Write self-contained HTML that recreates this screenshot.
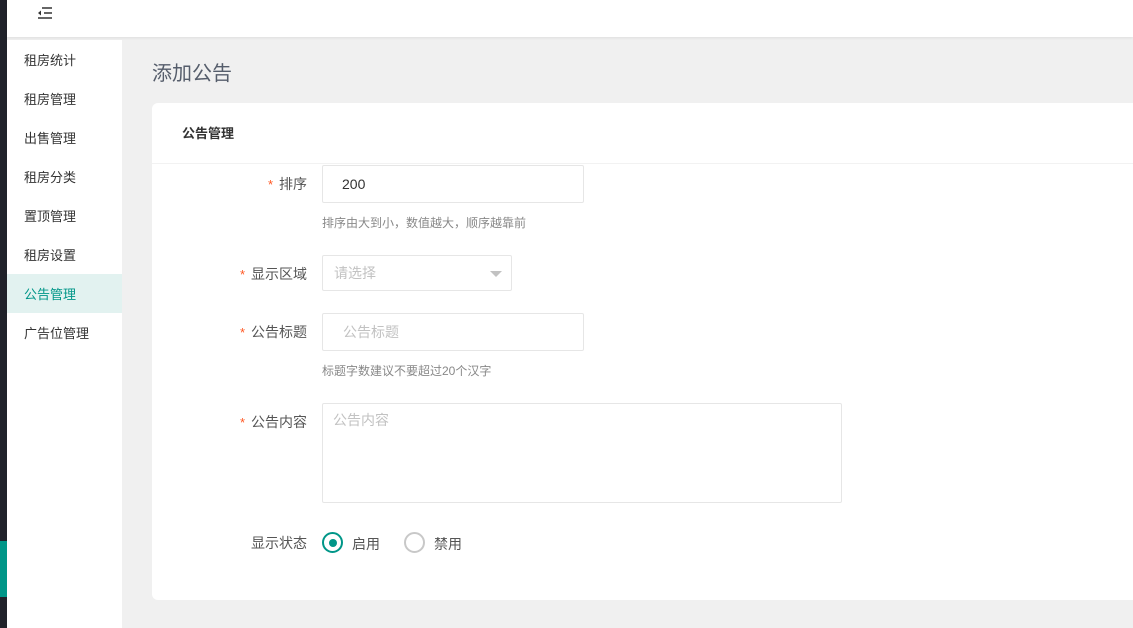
<!DOCTYPE html>
<html><head><meta charset="utf-8"><style>
*{margin:0;padding:0;box-sizing:border-box}
body{width:1133px;height:628px;overflow:hidden;background:#f0f0f0;font-family:"Liberation Sans","Noto Sans CJK SC",sans-serif;font-size:13px;color:#333;position:relative}
.strip{position:absolute;left:0;top:0;width:7px;height:628px;background:#20222a}
.strip i{position:absolute;left:0;top:541px;width:7px;height:56px;background:#009688}
.head{position:absolute;left:7px;top:0;right:0;height:37px;background:#fff;box-shadow:0 1px 3px rgba(0,0,0,.08)}
.side{position:absolute;left:7px;top:40px;width:115px;height:588px;background:#fff}
.side div{height:39px;line-height:41px;padding-left:17px;font-size:13px;color:#333}
.side .on{background:#e2f2f0;color:#009688}
h1{position:absolute;left:152px;top:57px;font-size:20px;font-weight:normal;color:#555d6b}
.card{position:absolute;left:152px;top:103px;width:990px;height:497px;background:#fff;border-radius:6px}
.ct{height:61px;line-height:61px;padding-left:30px;font-weight:bold;font-size:13px;color:#333;border-bottom:1px solid #f2f2f2}
.lab{position:absolute;right:835px;font-size:14px;color:#555;text-align:right;white-space:nowrap}
.lab b{color:#ff5722;font-weight:normal;margin-right:6px;font-size:13px}
.in{position:absolute;left:170px;border:1px solid #e6e6e6;border-radius:2px;background:#fff;font-size:14px}
.tip{position:absolute;left:170px;font-size:12px;color:#888}
</style></head><body>
<div class="strip"><i></i></div>
<div class="head"><svg style="position:absolute;left:30px;top:6px" width="16" height="14" viewBox="0 0 16 14"><path d="M5 2h10M7 7h8M1 12h14" stroke="#333" stroke-width="1.6"/><path d="M1 7l3-2.5v5z" fill="#333"/></svg></div>
<div class="side">
<div>租房统计</div><div>租房管理</div><div>出售管理</div><div>租房分类</div><div>置顶管理</div><div>租房设置</div><div class="on">公告管理</div><div>广告位管理</div>
</div>
<h1>添加公告</h1>
<div class="card">
<div class="ct">公告管理</div>
<div class="lab" style="top:71px"><b>*</b>排序</div>
<div class="in" style="top:62px;width:262px;height:38px;line-height:36px;padding-left:19px;color:#333">200</div>
<div class="tip" style="top:111px">排序由大到小，数值越大，顺序越靠前</div>
<div class="lab" style="top:161px"><b>*</b>显示区域</div>
<div class="in" style="top:152px;width:190px;height:36px;line-height:34px;padding-left:11px;color:#c2c2c2">请选择<span style="position:absolute;right:9px;top:15px;border:6px solid transparent;border-top-color:#c2c2c2;border-bottom:0"></span></div>
<div class="lab" style="top:219px"><b>*</b>公告标题</div>
<div class="in" style="top:210px;width:262px;height:38px;line-height:36px;padding-left:20px;color:#c2c2c2">公告标题</div>
<div class="tip" style="top:259px">标题字数建议不要超过20个汉字</div>
<div class="lab" style="top:309px"><b>*</b>公告内容</div>
<div class="in" style="top:300px;width:520px;height:100px;padding:6px 10px;color:#c2c2c2">公告内容</div>
<div class="lab" style="top:430px">显示状态</div>
<div style="position:absolute;left:170px;top:429px;width:21px;height:21px;border:2px solid #009688;border-radius:50%"><i style="position:absolute;left:4.5px;top:4.5px;width:8px;height:8px;border-radius:50%;background:#009688"></i></div>
<div style="position:absolute;left:200px;top:431px;color:#555;font-size:14px">启用</div>
<div style="position:absolute;left:252px;top:429px;width:21px;height:21px;border:2px solid #c8c8c8;border-radius:50%"></div>
<div style="position:absolute;left:282px;top:431px;color:#555;font-size:14px">禁用</div>
</div>
</body></html>
